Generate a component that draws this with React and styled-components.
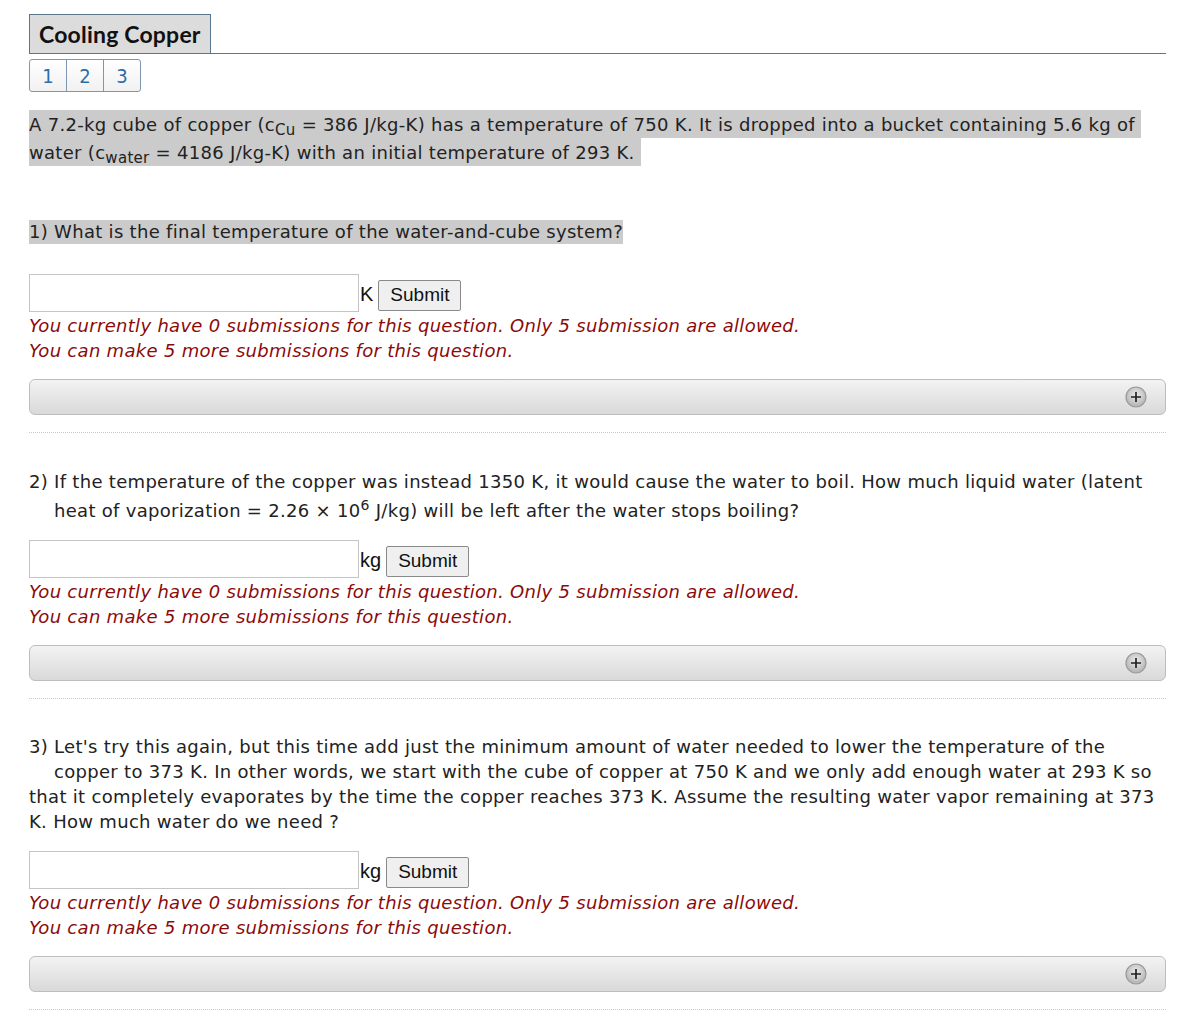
import React from 'react';
import styled, { createGlobalStyle } from 'styled-components';

const GlobalStyle = createGlobalStyle`
  body {
    margin: 0;
    background: #fff;
    font-family: "DejaVu Sans", sans-serif;
    color: #222;
  }
`;

const Page = styled.div`
  width: 1137px;
  margin-left: 29px;
  padding-top: 14px;
`;

const TitleBar = styled.div`
  border-bottom: 1px solid #5d7690;
  display: flex;
`;

const TitleTab = styled.div`
  background: #dcdcdc;
  border: 1px solid #5d7690;
  border-bottom: none;
  height: 38px;
  padding: 0 9px;
  display: flex;
  align-items: center;
  font-family: "Lato", "Open Sans", sans-serif;
  font-weight: 700;
  font-size: 23px;
  letter-spacing: 0.2px;
  color: #111;
`;

const PageTabs = styled.div`
  display: flex;
  margin-top: 5px;
`;

const PageTab = styled.div`
  width: 38px;
  height: 33px;
  box-sizing: border-box;
  border: 1px solid #7f97ad;
  margin-left: -1px;
  &:first-child {
    margin-left: 0;
    border-radius: 3px 0 0 3px;
  }
  &:last-child {
    border-radius: 0 3px 3px 0;
  }
  background: linear-gradient(#ffffff, #f1f1f1);
  color: #2b6ea8;
  font-family: "DejaVu Sans Condensed", "DejaVu Sans", sans-serif;
  font-size: 20px;
  display: flex;
  align-items: center;
  justify-content: center;
`;

const Intro = styled.div`
  margin-top: 19px;
  font-size: 18px;
  line-height: 28px;
  letter-spacing: 0.3px;
`;

const Highlight = styled.span`
  background: #cbcbcb;
  padding: ${p => (p.$tall ? '4px 0 3px' : '1px 0 2px')};
  white-space: pre;
`;

const Sub = styled.sub`
  font-size: 15px;
  vertical-align: -4px;
  line-height: 0;
`;

const Sup = styled.sup`
  font-size: 14px;
  vertical-align: 7px;
  line-height: 0;
`;

const Question = styled.div`
  margin-top: ${p => p.$top}px;
  font-size: 18px;
  letter-spacing: 0.3px;
  line-height: ${p => p.$lh || 25}px;
`;

const Line = styled.div`
  white-space: nowrap;
  padding-left: ${p => (p.$indent ? 25 : 0)}px;
`;

const AnswerRow = styled.div`
  margin-top: ${p => p.$top}px;
  display: flex;
  align-items: center;
  height: 38px;
`;

const AnswerInput = styled.input`
  width: 330px;
  height: 38px;
  box-sizing: border-box;
  border: 1px solid #c4c4c4;
  margin: 0;
  padding: 0 4px;
  font-size: 18px;
  outline: none;
`;

const Unit = styled.span`
  font-family: "Liberation Sans", Arial, sans-serif;
  font-size: 20px;
  color: #111;
  margin-left: 1px;
  margin-right: 5px;
  margin-top: 2px;
`;

const SubmitButton = styled.button`
  font-family: "Liberation Sans", Arial, sans-serif;
  font-size: 19px;
  color: #111;
  background: #efefef;
  border: 1px solid #8a8a8a;
  border-radius: 2px;
  height: 31px;
  padding: 0 11px;
  margin-top: 4px;
`;

const Messages = styled.div`
  margin-top: 1px;
  color: #8b0a0a;
  font-style: italic;
  font-size: 18px;
  letter-spacing: 0.3px;
  line-height: 25px;
`;

const HintBar = styled.div`
  margin-top: 16px;
  height: 36px;
  box-sizing: border-box;
  border: 1px solid #bdbdbd;
  border-radius: 6px;
  background: linear-gradient(#f3f3f3, #d9d9d9);
  display: flex;
  align-items: center;
  justify-content: flex-end;
  padding-right: 18px;
`;

const Divider = styled.div`
  margin-top: 17px;
  border-top: 1px dotted #c8c8c8;
`;

function PlusIcon() {
  return (
    <svg width="22" height="22" viewBox="0 0 22 22">
      <defs>
        <radialGradient id="pg" cx="50%" cy="40%" r="60%">
          <stop offset="0%" stopColor="#eeeeee" />
          <stop offset="100%" stopColor="#b0b0b0" />
        </radialGradient>
      </defs>
      <circle cx="11" cy="11" r="10" fill="url(#pg)" stroke="#999" strokeWidth="1.2" />
      <path d="M11 6v10M6 11h10" stroke="#222" strokeWidth="1.7" />
    </svg>
  );
}

function Submission({ unit, top }) {
  return (
    <>
      <AnswerRow $top={top}>
        <AnswerInput type="text" />
        <Unit>{unit}</Unit>
        <SubmitButton>Submit</SubmitButton>
      </AnswerRow>
      <Messages>
        You currently have 0 submissions for this question. Only 5 submission are allowed.
        <br />
        You can make 5 more submissions for this question.
      </Messages>
      <HintBar>
        <PlusIcon />
      </HintBar>
      <Divider />
    </>
  );
}

export default function App() {
  return (
    <Page>
      <GlobalStyle />
      <TitleBar>
        <TitleTab>Cooling Copper</TitleTab>
      </TitleBar>
      <PageTabs>
        <PageTab>1</PageTab>
        <PageTab>2</PageTab>
        <PageTab>3</PageTab>
      </PageTabs>

      <Intro>
        <Line>
          <Highlight $tall>
            A 7.2-kg cube of copper (c<Sub>Cu</Sub> = 386 J/kg-K) has a temperature of 750 K. It is dropped into a bucket containing 5.6 kg of{' '}
          </Highlight>
        </Line>
        <Line>
          <Highlight $tall>
            water (c<Sub>water</Sub> = 4186 J/kg-K) with an initial temperature of 293 K.{' '}
          </Highlight>
        </Line>
      </Intro>

      <Question $top={52}>
        <Line>
          <Highlight>1) What is the final temperature of the water-and-cube system?</Highlight>
        </Line>
      </Question>
      <Submission unit="K" top={30} />

      <Question $top={34} $lh={29}>
        <Line>
          2) If the temperature of the copper was instead 1350 K, it would cause the water to boil. How much liquid water (latent
        </Line>
        <Line $indent>
          heat of vaporization = 2.26 × 10<Sup>6</Sup> J/kg) will be left after the water stops boiling?
        </Line>
      </Question>
      <Submission unit="kg" top={15} />

      <Question $top={35}>
        <Line>
          3) Let's try this again, but this time add just the minimum amount of water needed to lower the temperature of the
        </Line>
        <Line $indent>
          copper to 373 K. In other words, we start with the cube of copper at 750 K and we only add enough water at 293 K so
        </Line>
        <Line>
          that it completely evaporates by the time the copper reaches 373 K. Assume the resulting water vapor remaining at 373
        </Line>
        <Line>K. How much water do we need ?</Line>
      </Question>
      <Submission unit="kg" top={17} />
    </Page>
  );
}
